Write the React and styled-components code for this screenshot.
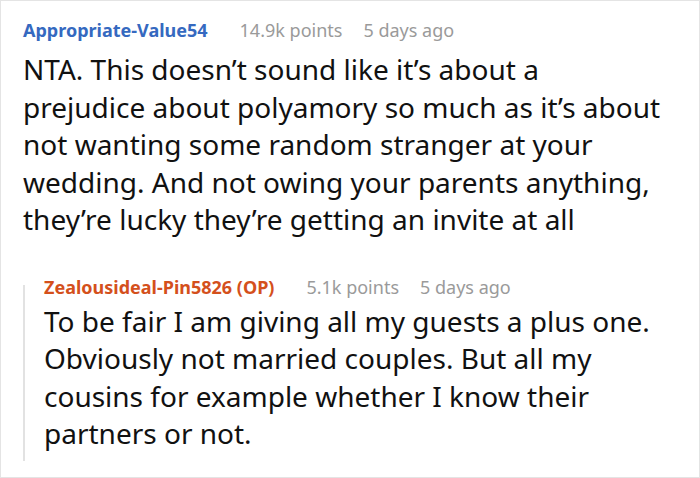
import styled, { createGlobalStyle } from 'styled-components';

const GlobalStyle = createGlobalStyle`
	html, body {
		margin: 0;
		padding: 0;
		background: #fff;
	}
	body {
		font-family: "Noto Sans", "Open Sans", sans-serif;
	}
`;

const Card = styled.div`
	width: 700px;
	height: 478px;
	box-sizing: border-box;
	border: 1px solid #e4e4e4;
	padding: 16px 0 0 22px;
	overflow: hidden;
`;

const Meta = styled.div`
	display: flex;
	align-items: baseline;
	height: 26px;
	line-height: 26px;
	font-size: 18px;
	white-space: nowrap;
`;

const Author = styled.span`
	font-weight: 700;
	color: ${(p) => p.$color};
	margin-right: 32px;
`;

const Info = styled.span`
	color: #9a9a9a;
	margin-right: 21px;
`;

const Body = styled.p`
	margin: ${(p) => p.$top}px 0 0;
	font-size: 28px;
	line-height: 37.5px;
	color: #111;
	white-space: nowrap;
`;

const Reply = styled.div`
	position: relative;
	margin: 35px 0 0 0;
	padding-left: 21px;

	&::before {
		content: '';
		position: absolute;
		left: 0;
		top: 11px;
		bottom: -8px;
		width: 2px;
		background: #e2e2e2;
	}
`;

const Comment = ({ author, color, points, age, text, bodyTop }) => (
	<div>
		<Meta>
			<Author $color={color}>{author}</Author>
			<Info>{points}</Info>
			<Info>{age}</Info>
		</Meta>
		<Body $top={bodyTop}>
			{text.map((line, i) => (
				<span key={i}>
					{line}
					{i < text.length - 1 && <br />}
				</span>
			))}
		</Body>
	</div>
);

export default function App() {
	return (
		<>
			<GlobalStyle />
			<Card>
				<Comment
					author="Appropriate-Value54"
					color="#3569c0"
					points="14.9k points"
					age="5 days ago"
					bodyTop={8}
					text={[
						'NTA. This doesn’t sound like it’s about a',
						'prejudice about polyamory so much as it’s about',
						'not wanting some random stranger at your',
						'wedding. And not owing your parents anything,',
						'they’re lucky they’re getting an invite at all',
					]}
				/>
				<Reply>
					<Comment
						author="Zealousideal-Pin5826 (OP)"
						color="#d4501c"
						points="5.1k points"
						age="5 days ago"
						bodyTop={3}
						text={[
							'To be fair I am giving all my guests a plus one.',
							'Obviously not married couples. But all my',
							'cousins for example whether I know their',
							'partners or not.',
						]}
					/>
				</Reply>
			</Card>
		</>
	);
}
